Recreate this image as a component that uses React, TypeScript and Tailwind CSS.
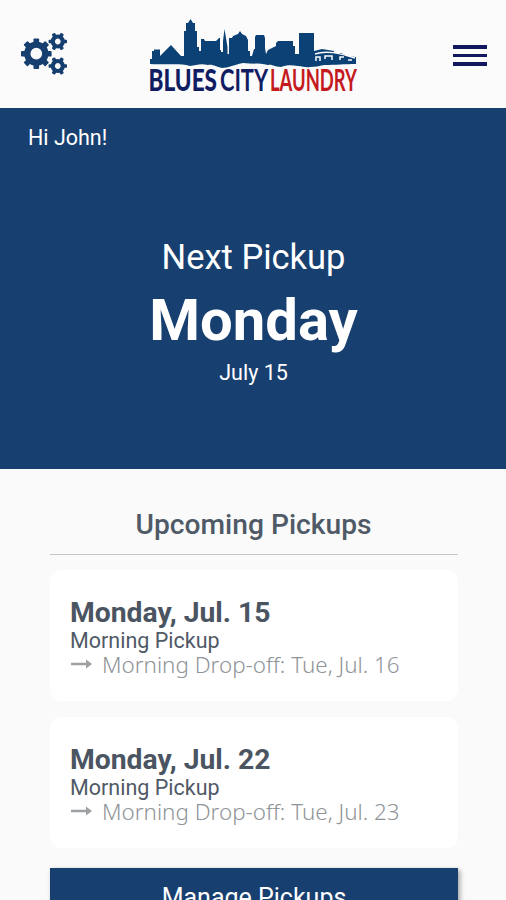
const PICKUPS = [
  { day: "Monday, Jul. 15", slot: "Morning Pickup", dropOff: "Morning Drop-off: Tue, Jul. 16" },
  { day: "Monday, Jul. 22", slot: "Morning Pickup", dropOff: "Morning Drop-off: Tue, Jul. 23" },
];

type GearProps = {
  cx: number;
  cy: number;
  radius: number;
  ring: number;
  teeth: number;
  tooth: number;
};

function Gear({ cx, cy, radius, ring, teeth, tooth }: GearProps) {
  return (
    <g transform={`translate(${cx} ${cy})`}>
      <circle r={radius} fill="none" stroke="currentColor" strokeWidth={ring} />
      {Array.from({ length: teeth }, (_, i) => (
        <rect
          key={i}
          x={radius}
          y={-tooth / 2}
          width={ring}
          height={tooth}
          rx={0.8}
          fill="currentColor"
          transform={`rotate(${(360 / teeth) * i})`}
        />
      ))}
    </g>
  );
}

function GearsIcon() {
  return (
    <svg viewBox="0 0 48 44" className="h-11 w-12 text-[#163f70]">
      <Gear cx={16.3} cy={21.7} radius={9} ring={6.3} teeth={8} tooth={5.6} />
      <Gear cx={37.8} cy={9.5} radius={5} ring={4.2} teeth={6} tooth={3.6} />
      <Gear cx={37.8} cy={34} radius={5} ring={4.2} teeth={6} tooth={3.6} />
    </svg>
  );
}

function ArrowIcon() {
  return (
    <svg viewBox="0 0 22 12" className="mr-[10px] mb-px h-3 w-[22px] shrink-0 text-[#9da1a4]">
      <path d="M1 4.700H16V1.500L22 6L16 10.500V7.300H1Z" fill="currentColor" />
    </svg>
  );
}

function Logo() {
  return (
    <svg viewBox="148 18 212 76" className="h-[76px] w-[212px]">
      <path
        fill="#0c4175"
        d="M150 64V59H152V51H154V49.500H160V56L163 53L171 45L181 56H184V31H186V23H188L190.500 19L193 23H195V31H197V47H199V51H201V39H204L205 41H216L219 38H220V50H221V52H223V41L224.500 29L226 38L227.500 47V54H229V38H232L233 36L238 34L240 31L242 34L246 36L248 40V51H250V56H252L254 49H255V37L256 35H264L265 38V48L266 54L268 50L276 46V43L278 41H293V46H295V54H299V33H314V51L322 49L334 51V53H341L347 56L356 57V64C345 64 336 65 324 65C319 66 315 67 310 67C306 68 303 66 298 66C291 65 286 65 281 67C274 67 272 64 268 65C259 63 251 64 243 63C233 65 228 68 222 68C216 67 213 64 208 65C201 63 196 65 190 66C180 63 171 65 150 64Z"
      />
      <path fill="none" stroke="#fbfbfb" strokeWidth="1.5" d="M315 54C326 50 339 53 355 58M316 61V57H320V61M325 59V56H332V60M340 60V57H344M348 60H352" />
      <g fontFamily="Lato, sans-serif" fontSize="30">
        <text x="148.500" y="91" textLength="68.500" lengthAdjust="spacingAndGlyphs" fontWeight="900" fill="#111d62">BLUES</text>
        <text x="220" y="91" textLength="48" lengthAdjust="spacingAndGlyphs" fontWeight="700" fill="#111d62">CITY</text>
        <text x="270" y="91" textLength="87" lengthAdjust="spacingAndGlyphs" fontWeight="700" fill="#c51a1d">LAUNDRY</text>
      </g>
    </svg>
  );
}

function Header() {
  return (
    <header className="flex h-[108px] shrink-0 items-start justify-between bg-[#fbfbfb] pr-[19px] pl-5">
      <button aria-label="Settings" className="mt-8 w-12">
        <GearsIcon />
      </button>
      <div className="mt-[18px] mr-[13px]">
        <Logo />
      </div>
      <button aria-label="Menu" className="mt-[45px] flex w-[34px] flex-col gap-[5px]">
        <span className="h-[3.5px] w-full bg-[#11185f]" />
        <span className="h-[3.5px] w-full bg-[#11185f]" />
        <span className="h-[3.5px] w-full bg-[#11185f]" />
      </button>
    </header>
  );
}

export default function App() {
  return (
    <div className="flex h-[900px] w-[506px] flex-col overflow-hidden bg-[#fafafa] font-['Roboto',sans-serif]">
      <Header />

      <section className="h-[361px] shrink-0 bg-[#173f70] text-white">
        <p className="pt-[17px] pl-7 text-[21.5px] leading-[26px]">Hi John!</p>
        <div className="mt-[85px] pl-px text-center">
          <p className="text-[34.5px] leading-[42px]">Next Pickup</p>
          <h1 className="mt-[7px] text-[58px] leading-[70px] font-bold">Monday</h1>
          <p className="mt-[5px] text-[21.5px] leading-[26px]">July 15</p>
        </div>
      </section>

      <main className="ml-[50px] flex w-[408px] shrink-0 flex-col">
        <h2 className="mt-[39px] border-b-[1.5px] border-[#c4c5c6] pr-px pb-[12px] text-center text-[28.2px] leading-[34px] font-medium text-[#505a67]">
          Upcoming Pickups
        </h2>
        <div className="mt-[15px] flex flex-col gap-4">
          {PICKUPS.map((pickup) => (
            <article key={pickup.day} className="h-[131px] rounded-xl bg-white px-5 pt-[27px]">
              <h3 className="text-[28.3px] leading-[32px] font-bold text-[#4b5562]">{pickup.day}</h3>
              <p className="-mt-px text-[21.5px] leading-[25px] text-[#505966]">{pickup.slot}</p>
              <p className="-mt-px flex items-center font-['Noto_Sans',sans-serif] text-[22.4px] leading-[25px] font-light whitespace-nowrap text-[#8f9498]">
                <ArrowIcon />
                {pickup.dropOff}
              </p>
            </article>
          ))}
        </div>
        <button className="mt-[20px] h-[60px] bg-[#173f70] text-[25px] leading-[56px] text-white shadow-[2px_2px_5px_rgba(0,0,0,0.35)]">
          Manage Pickups
        </button>
      </main>
    </div>
  );
}
